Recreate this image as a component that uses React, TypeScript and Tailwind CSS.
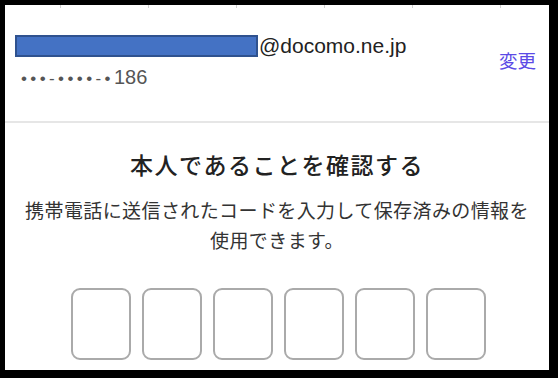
import React from "react";

export default function App() {
  const ticks = [0, 1, 2, 3, 4, 5];
  const boxes = [0, 1, 2, 3, 4, 5];
  return (
    <div className="w-[558px] h-[378px] bg-black pt-[5px] pl-[5px] pr-[9px] pb-[8px]">
      <div className="bg-white w-full h-full flex flex-col overflow-hidden">
        <div className="h-[3px] flex pl-[55px] gap-[87px]">
          {ticks.map((t) => (
            <div key={t} className="w-px h-[3px] bg-[#d0d0d0]" />
          ))}
        </div>
        <div className="h-[113px] flex justify-between">
          <div className="flex flex-col pl-[10px] pt-[27px]">
            <div className="flex items-center h-[22px]">
              <div className="w-[243px] h-[22px] bg-[#4472c4] border-2 border-[#2f528f]" />
              <span
                className="text-[21px] leading-[22px] text-[#222] ml-[1px]"
                style={{ fontFamily: '"Liberation Sans", Arial, sans-serif' }}
              >
                @docomo.ne.jp
              </span>
            </div>
            <div
              className="mt-[9px] ml-[6px] text-[20px] leading-[22px] text-[#555]"
              style={{ fontFamily: '"Liberation Sans", Arial, sans-serif' }}
            >
              <span className="tracking-[3.4px] text-[17px]">•••-••••-•</span>
              <span>186</span>
            </div>
          </div>
          <div
            className="self-center mb-[10px] pr-[13px] text-[18.5px] leading-[24px] text-[#5b4ae6]"
            style={{ fontFamily: '"Noto Sans CJK JP", "Noto Sans", sans-serif' }}
          >
            変更
          </div>
        </div>
        <div className="h-[2px] bg-[#e6e6e6]" />
        <div
          className="flex flex-col items-center"
          style={{ fontFamily: '"Noto Sans CJK JP", "Noto Sans", sans-serif' }}
        >
          <h1 className="mt-[25px] text-[23px] leading-[32px] tracking-[1.5px] font-medium text-[#222]">
            本人であることを確認する
          </h1>
          <p className="mt-[15px] text-[19px] leading-[30px] text-[#333] text-center tracking-[0.4px]">
            携帯電話に送信されたコードを入力して保存済みの情報を
            <br />
            使用できます。
          </p>
          <div className="mt-[33px] ml-[3px] flex gap-[11px]">
            {boxes.map((b) => (
              <div
                key={b}
                className="w-[60px] h-[72px] rounded-[9px] border-2 border-[#aaaaaa] bg-white"
              />
            ))}
          </div>
        </div>
      </div>
    </div>
  );
}
